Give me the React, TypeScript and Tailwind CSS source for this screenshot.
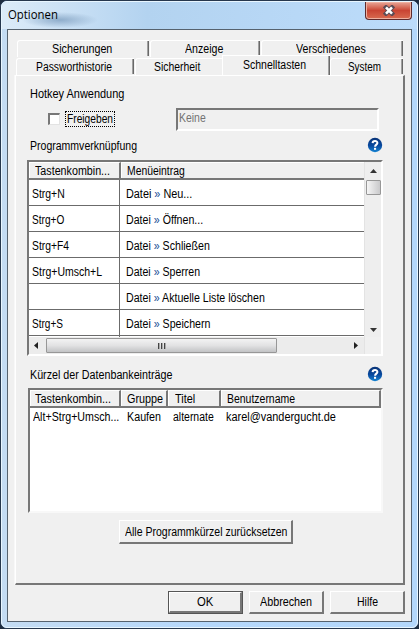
import { useLayoutEffect, useRef, useState, type ReactNode } from "react";

/* Text condensed horizontally to a fixed advance width, like the dialog's bitmap font. */
function T({ w, children, className = "" }: { w: number; children: ReactNode; className?: string }) {
  const ref = useRef<HTMLSpanElement>(null);
  const [scale, setScale] = useState(0.9);
  useLayoutEffect(() => {
    if (ref.current) setScale(w / ref.current.offsetWidth);
  }, [w]);
  return (
    <span className={`block shrink-0 whitespace-pre ${className}`} style={{ width: w }}>
      <span ref={ref} className="inline-block origin-left" style={{ transform: `scaleX(${scale})` }}>
        {children}
      </span>
    </span>
  );
}

function Tab({ label, w, className }: { label: string; w: number; className: string }) {
  return (
    <div className={`flex h-[17px] shrink-0 items-center rounded-tl-[3px] border-t border-l border-white ${className}`}>
      <T w={w}>{label}</T>
      <span className="ml-auto h-[15px] w-[2px] self-start border-l border-[#a0a0a0] bg-[#696969]" />
    </div>
  );
}

function Help({ className = "" }: { className?: string }) {
  return (
    <svg className={`h-4 w-4 shrink-0 ${className}`} viewBox="0 0 16 16">
      <defs>
        <linearGradient id="help" x1="0" y1="0" x2="0" y2="1">
          <stop offset="0" stopColor="#0a3478" />
          <stop offset="0.55" stopColor="#08499f" />
          <stop offset="1" stopColor="#1684d2" />
        </linearGradient>
      </defs>
      <circle cx="8" cy="8" r="7.2" fill="url(#help)" />
      <path d="M5.6 6.1C5.7 3.3 10.4 3.3 10.4 6C10.4 7.7 8.1 7.6 8.1 9.7" fill="none" stroke="#fff" strokeWidth="2" />
      <rect x="7" y="10.8" width="2.1" height="2" fill="#fff" />
    </svg>
  );
}

function Button({ label, w, className }: { label: string; w: number; className: string }) {
  return (
    <button
      className={`flex shrink-0 items-center justify-center border-t border-r-2 border-b-2 border-l border-t-white border-l-white border-r-[#777] border-b-[#777] bg-[#f0f0f0] ${className}`}
    >
      <T w={w}>{label}</T>
    </button>
  );
}

function HeadCell({ label, w, className }: { label: string; w: number; className: string }) {
  return (
    <div className={`flex h-full shrink-0 items-center border-t border-l border-t-white border-l-white border-r-2 border-r-[#777] ${className}`}>
      <T w={w}>{label}</T>
    </div>
  );
}

const rows: [string, number, string, number][] = [
  ["Strg+N", 33, "Neu...", 66],
  ["Strg+O", 32, "Öffnen...", 77],
  ["Strg+F4", 37, "Schließen", 84],
  ["Strg+Umsch+L", 70, "Sperren", 74],
  ["", 0, "Aktuelle Liste löschen", 139],
  ["Strg+S", 31, "Speichern", 84],
];

function MenuTable() {
  return (
    <div className="ml-[11px] flex h-[196px] w-[356px] flex-col border-t-2 border-r-2 border-b-2 border-l-2 border-t-[#777] border-l-[#777] border-r-white border-b-white bg-[#f0f0f0]">
      <div className="flex h-[175px]">
        <div className="flex w-[335px] flex-col overflow-hidden bg-white">
          <div className="flex h-[18px] shrink-0 border-b-2 border-[#777] bg-[#f0f0f0]">
            <HeadCell label="Tastenkombin..." w={75} className="w-[92px] pl-[5px]" />
            <div className="flex flex-1 items-center border-t border-l border-white pl-[5px]">
              <T w={58}>Menüeintrag</T>
            </div>
          </div>
          {rows.map(([key, kw, item, iw]) => (
            <div key={item} className="flex h-[26px] shrink-0 border-b border-[#6b6b6b]">
              <div className="flex w-[91px] shrink-0 items-center border-r border-[#6b6b6b] pt-[2px] pl-[3px]">
                {key && <T w={kw}>{key}</T>}
              </div>
              <div className="flex items-center pt-[2px] pl-[6px]">
                <T w={iw}>
                  Datei <span className="text-[#1d4f96]">»</span> {item}
                </T>
              </div>
            </div>
          ))}
          <div className="h-[4px] w-[91px] border-r border-[#6b6b6b]" />
        </div>
        <div className="flex w-[17px] flex-col items-center border-l border-[#e3e3e3] bg-[#eee]">
          <svg className="mt-[7px] h-[4px] w-[7px]" viewBox="0 0 7 4"><path d="M3.5 0L7 4H0Z" fill="#333" /></svg>
          <div className="mt-[7px] h-[15px] w-[15px] rounded-[1px] border border-[#979797] bg-linear-to-r from-[#f5f5f5] to-[#c9c9cb]" />
          <svg className="mt-auto mb-[5px] h-[4px] w-[7px]" viewBox="0 0 7 4"><path d="M0 0H7L3.5 4Z" fill="#333" /></svg>
        </div>
      </div>
      <div className="flex h-[17px] items-center bg-[#ececec]">
        <svg className="ml-[5px] h-[7px] w-[4px]" viewBox="0 0 4 7"><path d="M4 0V7L0 3.5Z" fill="#222" /></svg>
        <div className="ml-[8px] flex h-[15px] w-[231px] items-center justify-center gap-[1px] rounded-[1px] border border-[#979797] bg-linear-to-b from-[#f3f3f3] via-[#e2e2e3] to-[#c2c3c5]">
          <span className="h-[6px] w-[2px] border-l border-[#444] bg-[#aaa]" />
          <span className="h-[6px] w-[2px] border-l border-[#444] bg-[#aaa]" />
          <span className="h-[6px] w-[2px] border-l border-[#444] bg-[#aaa]" />
        </div>
        <svg className="ml-[77px] h-[7px] w-[4px]" viewBox="0 0 4 7"><path d="M0 0V7L4 3.5Z" fill="#222" /></svg>
        <span className="ml-auto h-full w-[17px] border-l border-[#e3e3e3] bg-[#f0f0f0]" />
      </div>
    </div>
  );
}

function EntryTable() {
  return (
    <div className="ml-[12px] h-[125px] w-[355px] border-2 border-t-[#777] border-l-[#777] border-r-[#f8f8f8] border-b-[#f8f8f8] bg-white">
      <div className="flex h-[18px] border-b-2 border-[#777] bg-[#f0f0f0]">
        <HeadCell label="Tastenkombin..." w={76} className="w-[91px] pt-[1px] pl-[4px]" />
        <HeadCell label="Gruppe" w={36} className="w-[47px] pt-[1px] pl-[5px]" />
        <HeadCell label="Titel" w={20} className="w-[53px] pt-[1px] pl-[6px]" />
        <HeadCell label="Benutzername" w={68} className="w-[160px] pt-[1px] pl-[5px]" />
      </div>
      <div className="mt-[1px] flex h-[16px] items-center pl-[3px]">
        <T w={86}>Alt+Strg+Umsch...</T>
        <T w={34} className="ml-[8px]">Kaufen</T>
        <T w={41} className="ml-[12px]">alternate</T>
        <T w={110} className="ml-[12px]">karel@vandergucht.de</T>
      </div>
    </div>
  );
}

export default function App() {
  return (
    <div className="h-[629px] w-[419px] overflow-hidden bg-[#1d2c40] font-['Liberation_Sans',Arial,sans-serif] text-[12px] leading-[14px] text-black">
      <div className="flex h-[629px] w-[419px] flex-col rounded-[7px] border border-[#26374d] bg-[#b7d8fa]">
        <div className="flex h-full flex-col rounded-[6px] border border-[#e8f6ff] bg-linear-to-r from-[#c4dcf3] via-[#b5d8fc] to-[#b3d7fb]">
          <div className="flex h-[27px] shrink-0 rounded-t-[5px] bg-[radial-gradient(ellipse_38px_8px_at_58px_18px,#8fadcb_0%,#8fadcb00_100%),linear-gradient(to_right,#dcebf8,#b3d3f0_35%,#bcdcfb)]">
            <T w={50} className="mt-[5px] ml-[6px] font-['Open_Sans',sans-serif] text-[12.5px] leading-[16px]">Optionen</T>
            <div className="mr-[5px] ml-auto flex h-[18px] w-[47px] items-center justify-center rounded-b-[4px] border border-t-0 border-[#5e2a2c] bg-linear-to-b from-[#e6a597] from-0% via-[#c94433] via-50% to-[#d86a50] shadow-[inset_0_0_0_1px_#eeb0a0]">
              <svg className="h-[11px] w-[12px]" viewBox="0 0 12 11">
                <path d="M3 2.4L9 8.6M9 2.4L3 8.6" stroke="#5a4b55" strokeWidth="4.4" strokeLinecap="square" />
                <path d="M3 2.4L9 8.6M9 2.4L3 8.6" stroke="#fff" strokeWidth="2.6" />
              </svg>
            </div>
          </div>
          <div className="ml-[5px] flex h-[593px] w-[405px] shrink-0 flex-col border border-[#56626e] bg-[#f0f0f0]">
            <div className="mt-[10px] ml-[9px] flex h-[16px] shrink-0">
              <Tab label="Sicherungen" w={60} className="w-[132px] pl-[34px]" />
              <Tab label="Anzeige" w={38} className="ml-[1px] w-[110px] pl-[34px]" />
              <Tab label="Verschiedenes" w={70} className="ml-[1px] w-[142px] pl-[34px]" />
            </div>
            <div className="ml-[8px] flex h-[19px] shrink-0 items-end">
              <Tab label="Passworthistorie" w={76} className="w-[118px] pl-[19px]" />
              <Tab label="Sicherheit" w={46} className="ml-[1px] w-[87px] pl-[18px] [&>span:last-child]:invisible" />
              <div className="flex h-[20px] w-[108px] shrink-0 border-t border-l border-white bg-[#f0f0f0] pl-[20px]">
                <T w={63} className="mt-[2px]">Schnelltasten</T>
                <span className="ml-auto h-[19px] w-[2px] border-l border-[#a0a0a0] bg-[#696969]" />
              </div>
              <Tab label="System" w={33} className="w-[73px] pl-[17px]" />
            </div>
            <div className="ml-[7px] flex h-[510px] w-[390px] shrink-0 flex-col border-t border-r-2 border-b-2 border-l border-t-white border-l-white border-r-[#777] border-b-[#777] shadow-[-1px_0_0_#f8f8f8]">
              <T w={94} className="mt-[11px] ml-[14px]">Hotkey Anwendung</T>
              <div className="mt-[7px] flex h-[23px] items-center">
                <span className="mb-[2px] ml-[32px] h-[12px] w-[12px] border border-t-2 border-l-2 border-t-[#777] border-l-[#777] border-r-[#e3e3e3] border-b-[#e3e3e3] bg-white" />
                <div className="mb-[1px] ml-[5px] flex h-[16px] w-[50px] items-center border border-dotted border-black pl-[1px]">
                  <T w={46}>Freigeben</T>
                </div>
                <div className="ml-[61px] flex h-[23px] w-[203px] items-start border-2 border-t-[#777] border-l-[#777] border-r-white border-b-white pt-[1px] pl-[1px] text-[#737373]">
                  <T w={27}>Keine</T>
                </div>
              </div>
              <div className="mt-[6px] flex h-[17px] items-center">
                <T w={107} className="ml-[14px]">Programmverknüpfung</T>
                <Help className="mr-[20px] mb-[1px] ml-auto" />
              </div>
              <div className="mt-[6px]"><MenuTable /></div>
              <div className="mt-[9px] flex h-[17px] items-center">
                <T w={142} className="mt-[2px] ml-[14px]">Kürzel der Datenbankeinträge</T>
                <Help className="mr-[20px] ml-auto" />
              </div>
              <div className="mt-[6px]"><EntryTable /></div>
              <Button label="Alle Programmkürzel zurücksetzen" w={162} className="mt-[7px] ml-[103px] h-[24px] w-[174px] pt-[1px]" />
            </div>
            <div className="mt-[6px] ml-[160px] flex">
              <div className="border border-[#555]">
                <Button label="OK" w={16} className="h-[21px] w-[73px]" />
              </div>
              <Button label="Abbrechen" w={52} className="ml-[6px] h-[23px] w-[75px]" />
              <Button label="Hilfe" w={21} className="ml-[6px] h-[23px] w-[75px]" />
            </div>
          </div>
        </div>
      </div>
    </div>
  );
}
